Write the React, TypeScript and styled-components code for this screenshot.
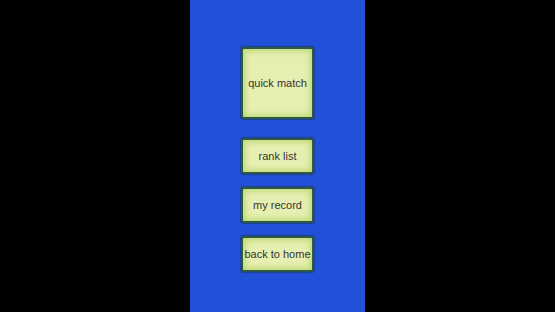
import styled, { createGlobalStyle } from 'styled-components'

const GlobalStyle = createGlobalStyle`
	html, body {
		margin: 0;
		padding: 0;
		background: #000;
	}
	#root {
		height: 312px;
	}
`

const Screen = styled.div`
	display: flex;
	justify-content: center;
	height: 312px;
	background: #000;
`

const Panel = styled.div`
	width: 175px;
	height: 100%;
	background: #2350d9;
	display: flex;
	flex-direction: column;
	align-items: center;
	padding-top: 47px;
	box-sizing: border-box;
`

const Menu = styled.div`
	display: flex;
	flex-direction: column;
	gap: 13px;
`

const MenuButton = styled.button<{ $tall?: boolean }>`
	width: 73px;
	height: ${p => (p.$tall ? 72 : 36)}px;
	margin-bottom: ${p => (p.$tall ? 6 : 0)}px;
	padding: 0;
	border: 2px solid #2c5848;
	border-radius: 3px;
	background: #e6efb2;
	box-shadow: inset 0 0 6px 2px #bcd872, 0 0 1px 1px rgba(20, 50, 60, 0.5);
	color: #333;
	font-family: 'Liberation Sans', Arial, sans-serif;
	font-size: 11px;
	white-space: nowrap;
	box-sizing: border-box;
	cursor: pointer;
`

export default function App() {
	return (
		<>
			<GlobalStyle />
			<Screen>
				<Panel>
					<Menu>
						<MenuButton $tall>quick match</MenuButton>
						<MenuButton>rank list</MenuButton>
						<MenuButton>my record</MenuButton>
						<MenuButton>back to home</MenuButton>
					</Menu>
				</Panel>
			</Screen>
		</>
	)
}
